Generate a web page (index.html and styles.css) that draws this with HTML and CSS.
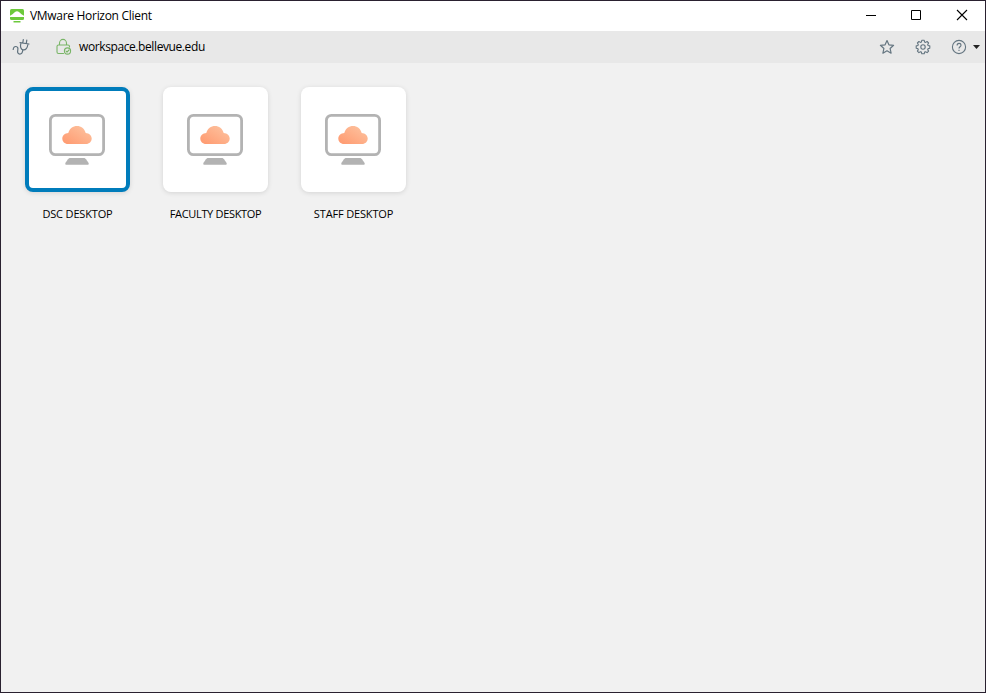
FILE: index.html
```html
<!DOCTYPE html>
<html lang="en">
<head>
<meta charset="utf-8">
<title>VMware Horizon Client</title>
<link rel="stylesheet" href="styles.css">
</head>
<body>
<svg width="0" height="0" class="defs">
  <defs>
    <linearGradient id="peach" x1="0" y1="1" x2="1" y2="0"><stop offset="0" stop-color="#ff986e"/><stop offset="1" stop-color="#fdc6a3"/></linearGradient>
    <symbol id="desktop" viewBox="0 0 58 54">
      <rect x="2.400" y="2.400" width="53.200" height="39.200" rx="5" fill="none" stroke="#b3b3b3" stroke-width="2.800"/>
      <path d="M22.500 45h13c1.200 0 1.800.4 2.500 1.200l2.300 3.300c1 1.500.3 2.300-1 2.300H18.700c-1.300 0-2-.8-1-2.300l2.300-3.300c.7-.8 1.300-1.200 2.500-1.200z" fill="#b3b3b3"/>
      <path d="M20 31c-3.300 0-5.700-2.500-5.700-5.500 0-3 2.500-5.400 6-5.500C21.500 15.500 25 13 29 13s7.500 2.500 8.700 7c3.500.1 6 2.500 6 5.500 0 3-2.400 5.500-5.700 5.500z" fill="url(#peach)"/>
    </symbol>
  </defs>
</svg>
<div class="window">
  <header class="titlebar">
    <svg class="logo" width="16" height="16" viewBox="0 0 16 16">
      <rect x="1" y="1" width="14" height="11" rx="1.500" fill="#6cc93c"/>
      <path d="M1 9V7.800l2.500-1.500L6 4q2-1.400 4 0l2.500 2.300L15 7.800V9z" fill="#fff"/>
      <path d="M4.500 13h7v1.500h-7z" fill="#6cc93c"/>
    </svg>
    <h1 class="title">VMware Horizon Client</h1>
    <div class="controls">
      <svg width="46" height="30" viewBox="0 0 46 30"><path d="M18 14.500h10" stroke="#000"/></svg>
      <svg width="46" height="30" viewBox="0 0 46 30"><path d="M17.500 9.500h9v9h-9z" fill="none" stroke="#000"/></svg>
      <svg width="45" height="30" viewBox="0 0 45 30"><path d="M17 9l10 10M27 9L17 19" stroke="#000" stroke-width="1.100"/></svg>
    </div>
  </header>
  <nav class="toolbar">
    <svg class="plug" width="18" height="18" viewBox="0 0 18 18" fill="none" stroke="#5f717d" stroke-width="1.200" stroke-linecap="round" stroke-linejoin="round">
      <path d="M1.200 11.500C1.400 9.500 2.500 8.300 4 8.500c1.700.2 2.200 1.700 1.800 3.300c-.6 2.700.2 4.300 2.100 4.300 1.900 0 2.600-1.300 2.900-4.100"/>
      <path d="M8 4.600L17 6M8.900 4.900C8 8.800 8.800 11.500 11.200 11.900c2.500.4 4.200-1.900 4.800-5.900M10.800 4.800l.5-3.300M14.300 5.300l.5-3.300"/>
    </svg>
    <svg class="lock" width="16" height="18" viewBox="0 0 16 18" fill="none" stroke="#79b567" stroke-width="1.100" stroke-linecap="round" stroke-linejoin="round">
      <path d="M3.500 7V5.200a3.500 3.800 0 0 1 7 0V7M7.500 15.500h-5q-1.500 0-1.500-1.500V8.500Q1 7 2.500 7H12q1.500 0 1.500 1.500V9"/>
      <circle cx="11.500" cy="13" r="3.100"/><path d="M10 13l1 1.100 2-2.100"/>
    </svg>
    <span class="address">workspace.bellevue.edu</span>
    <div class="actions">
      <svg width="16" height="16" viewBox="0 0 16 16"><path d="M8 1.600l1.900 4.200 4.700.5-3.500 3.200 1 4.700L8 11.800l-4.100 2.400 1-4.700L1.400 6.300l4.700-.5z" fill="none" stroke="#647580" stroke-width="1.200" stroke-linejoin="round"/></svg>
      <svg width="16" height="16" viewBox="0 0 16 16" fill="none" stroke="#647580" stroke-width="1.100" stroke-linejoin="round"><circle cx="8" cy="8" r="2.200"/><path d="M6.800 1.300h2.400l.4 1.700 1 .4 1.500-.9 1.500 1.500-.9 1.500.4 1 1.700.4v2.300l-1.700.4-.4 1 .9 1.500-1.500 1.500-1.500-.9-1 .4-.4 1.700H6.800l-.4-1.700-1-.4-1.500.9-1.500-1.500.9-1.500-.4-1-1.700-.4V6.900l1.700-.4.4-1-.9-1.500 1.500-1.500 1.500.9 1-.4z"/></svg>
      <svg width="16" height="16" viewBox="0 0 16 16" fill="none" stroke="#647580" stroke-width="1.100"><circle cx="8" cy="8" r="6.600"/><path d="M6.100 6.500C6.100 4.900 7 4.400 8 4.400s2 .6 2 1.900c0 1.500-2 1.500-2 3.200M8 10.700v1.200"/></svg>
      <svg class="caret" width="7" height="4" viewBox="0 0 7 4"><path d="M0 0h7L3.500 4z" fill="#222"/></svg>
    </div>
  </nav>
  <main class="desktops">
    <div class="item"><div class="tile selected"><svg width="58" height="54"><use href="#desktop"/></svg></div><span class="label short">DSC DESKTOP</span></div>
    <div class="item"><div class="tile"><svg width="58" height="54"><use href="#desktop"/></svg></div><span class="label">FACULTY DESKTOP</span></div>
    <div class="item"><div class="tile"><svg width="58" height="54"><use href="#desktop"/></svg></div><span class="label short">STAFF DESKTOP</span></div>
  </main>
</div>
</body>
</html>
```
FILE: styles.css
```css
* { box-sizing: border-box; }
body { margin: 0; font-family: "Open Sans", "Noto Sans", sans-serif; color: #000; }
svg { display: block; flex: none; }
.defs { position: absolute; }
.window { width: 986px; height: 693px; border: 1px solid #2a2130; background: #f1f1f1; display: flex; flex-direction: column; overflow: hidden; }
.titlebar { height: 30px; background: #fff; display: flex; align-items: center; padding-left: 8px; }
.title { margin: 0 0 0 5px; font-size: 12px; font-weight: 400; line-height: 16px; letter-spacing: -0.3px; white-space: nowrap; }
.controls { display: flex; margin-left: auto; }
.toolbar { height: 32px; background: #e8e8e8; border-bottom: 1px solid #e8e8e8; display: flex; align-items: center; padding: 0 5px 0 11px; }
.lock { margin-left: 26px; }
.address { margin-left: 7px; font-size: 12px; line-height: 16px; letter-spacing: -0.4px; }
.actions { display: flex; align-items: center; gap: 20px; margin-left: auto; }
.caret { margin-left: -14px; }
.desktops { display: flex; gap: 33px; padding: 24px; }
.item { width: 105px; display: flex; flex-direction: column; align-items: center; gap: 14px; }
.tile { width: 105px; height: 105px; border-radius: 8px; background: #fff; display: flex; align-items: center; justify-content: center; padding-right: 1px; box-shadow: 0 1px 5px rgba(0, 0, 0, 0.12); }
.selected { border: 4px solid #007cbb; }
.label { font-size: 11px; line-height: 16px; letter-spacing: -0.32px; white-space: nowrap; }
.short { letter-spacing: -0.16px; }
```
